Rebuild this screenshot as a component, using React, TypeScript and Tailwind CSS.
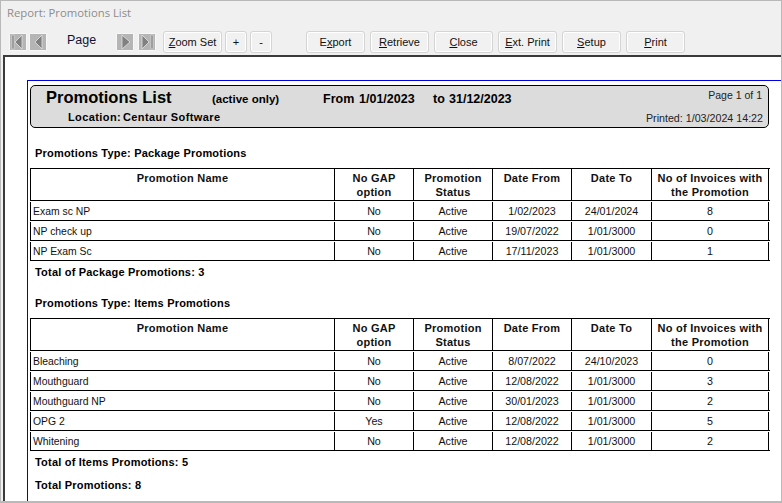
import React from 'react';

type Row = { name: string; gap: string; from: string; to: string; count: string };

const packageRows: Row[] = [
  { name: 'Exam sc NP', gap: 'No', from: '1/02/2023', to: '24/01/2024', count: '8' },
  { name: 'NP check up', gap: 'No', from: '19/07/2022', to: '1/01/3000', count: '0' },
  { name: 'NP Exam Sc', gap: 'No', from: '17/11/2023', to: '1/01/3000', count: '1' },
];

const itemRows: Row[] = [
  { name: 'Bleaching', gap: 'No', from: '8/07/2022', to: '24/10/2023', count: '0' },
  { name: 'Mouthguard', gap: 'No', from: '12/08/2022', to: '1/01/3000', count: '3' },
  { name: 'Mouthguard NP', gap: 'No', from: '30/01/2023', to: '1/01/3000', count: '2' },
  { name: 'OPG 2', gap: 'Yes', from: '12/08/2022', to: '1/01/3000', count: '5' },
  { name: 'Whitening', gap: 'No', from: '12/08/2022', to: '1/01/3000', count: '2' },
];

const gridCols = 'grid grid-cols-[303px_79px_79px_79px_80px_118px]';
const sectionText = 'ml-[7px] h-[14px] text-[11px] leading-[14px] font-bold tracking-[0.2px]';

function NavButton({ dir, end }: { dir: 'left' | 'right'; end?: boolean }) {
  return (
    <div className="w-[18px] h-[18px] rounded-[2px] bg-[#f7f7f7] flex items-center justify-center">
      <svg width="16" height="16" viewBox="0 0 16 16">
        <rect width="16" height="16" fill="#b5b5b5" />
        {dir === 'left' ? (
          <>
            {end && <rect x="2" y="1" width="2" height="14" fill="#808080" stroke="#e4e4e4" strokeWidth="0.6" />}
            <polygon points="12,1 12,15 5,8" fill="#808080" stroke="#e4e4e4" strokeWidth="0.8" />
          </>
        ) : (
          <>
            <polygon points={end ? '3,1 3,15 10,8' : '5,1 5,15 13,8'} fill="#808080" stroke="#e4e4e4" strokeWidth="0.8" />
            {end && <rect x="12" y="1" width="2" height="14" fill="#808080" stroke="#e4e4e4" strokeWidth="0.6" />}
          </>
        )}
      </svg>
    </div>
  );
}

function ToolButton({ children, w = 'w-[59px]' }: { children: React.ReactNode; w?: string }) {
  return (
    <div className={`${w} h-[22px] rounded-[3px] border border-[#d4d4d4] bg-[#f1f1f1] shadow-[inset_0_0_0_1px_#ffffff] flex items-center justify-center text-[11px] text-[#111111]`}>
      <span>{children}</span>
    </div>
  );
}

function PromoTable({ rows }: { rows: Row[] }) {
  return (
    <div className="w-[740px] ml-[2px] text-[#111111]">
      <div className={`${gridCols} h-[33px] border-t border-b border-l border-black font-bold text-[11px] leading-[14px] text-center tracking-[0.25px]`}>
        <div className="pt-[2px]">Promotion Name</div>
        <div className="pt-[2px] border-l border-black">No GAP<br />option</div>
        <div className="pt-[2px] border-l border-black">Promotion<br />Status</div>
        <div className="pt-[2px] border-l border-black">Date From</div>
        <div className="pt-[2px] border-l border-black">Date To</div>
        <div className="pt-[2px] border-x border-black">No of Invoices with<br />the Promotion</div>
      </div>
      {rows.map((r) => (
        <div key={r.name} className="h-[20px] pt-[1px] border-b border-black">
          <div className={`${gridCols} h-[18px] border-l border-black text-[10.7px] leading-[18px] text-center`}>
            <div className="text-left pl-[2px] pt-[1px] text-[10.4px] leading-[17px]">{r.name}</div>
            <div className="border-l border-black">{r.gap}</div>
            <div className="border-l border-black">Active</div>
            <div className="border-l border-black">{r.from}</div>
            <div className="border-l border-black">{r.to}</div>
            <div className="border-x border-black">{r.count}</div>
          </div>
        </div>
      ))}
    </div>
  );
}

export default function App() {
  return (
    <div className="w-[782px] h-[503px] overflow-hidden bg-[#f0f0f0] border-t border-l border-b-2 border-r border-[#b9b9b9] flex flex-col font-['Liberation_Sans',Arial,sans-serif]">
      <div className="h-[24px] pl-[6px] pt-[4px] text-[11.3px] leading-[16px] text-[#8c8c8c] font-['Open_Sans',sans-serif]">
        Report: Promotions List
      </div>

      <div className="h-[30px] flex items-start pt-[6px] pl-[8px]">
        <div className="flex gap-[2px] mt-[2px]"><NavButton dir="left" end /><NavButton dir="left" /></div>
        <div className="w-[69px] pl-[20px] text-[12.5px] leading-[18px] text-[#111133]">Page</div>
        <div className="flex gap-[4px] mt-[2px]"><NavButton dir="right" /><NavButton dir="right" end /></div>
        <div className="flex gap-[3px] ml-[7px]">
          <ToolButton><u>Z</u>oom Set</ToolButton>
          <ToolButton w="w-[22px]">+</ToolButton>
          <ToolButton w="w-[22px]">-</ToolButton>
        </div>
        <div className="flex gap-[5px] ml-[34px]">
          <ToolButton>E<u>x</u>port</ToolButton>
          <ToolButton><u>R</u>etrieve</ToolButton>
          <ToolButton><u>C</u>lose</ToolButton>
          <ToolButton><u>E</u>xt. Print</ToolButton>
          <ToolButton><u>S</u>etup</ToolButton>
          <ToolButton><u>P</u>rint</ToolButton>
        </div>
      </div>

      <div className="flex-1 ml-[2px] bg-white border-t-2 border-l-2 border-[#3a3a3a] pt-[23px] pl-[22px] min-h-0">
        <div className="h-full border-t border-l border-[#0000e6] pt-[4px] text-black">
          <div className="w-[739px] ml-[2px] h-[43px] rounded-[5px] border border-black bg-[#dcdcdc] relative flex flex-col">
            <div className="flex items-baseline h-[23px] pl-[15px] font-bold">
              <span className="text-[16.5px] leading-[22px] w-[166px]">Promotions List</span>
              <span className="text-[11.5px] w-[111px]">(active only)</span>
              <span className="text-[12.5px] w-[36px]">From</span>
              <span className="text-[12.5px] w-[74px]">1/01/2023</span>
              <span className="text-[12.5px] w-[16px]">to</span>
              <span className="text-[12.5px]">31/12/2023</span>
            </div>
            <div className="flex pl-[37px] text-[11px] leading-[14px] font-bold tracking-[0.4px] pt-[1px]">
              <span className="w-[55px]">Location:</span>
              <span>Centaur Software</span>
            </div>
            <div className="absolute right-[6px] top-[2px] text-[10.5px] leading-[14px] text-[#222222]">Page 1 of 1</div>
            <div className="absolute right-[5px] top-[25px] text-[10.7px] leading-[14px] text-[#222222]">Printed: 1/03/2024 14:22</div>
          </div>

          <div className={`mt-[18px] mb-[8px] ${sectionText}`}>Promotions Type: Package Promotions</div>
          <PromoTable rows={packageRows} />
          <div className={`mt-[4px] ${sectionText}`}>Total of Package Promotions: 3</div>

          <div className={`mt-[17px] mb-[8px] ${sectionText}`}>Promotions Type: Items Promotions</div>
          <PromoTable rows={itemRows} />
          <div className={`mt-[4px] ${sectionText}`}>Total of Items Promotions: 5</div>
          <div className={`mt-[9px] ${sectionText}`}>Total Promotions: 8</div>
        </div>
      </div>
    </div>
  );
}
